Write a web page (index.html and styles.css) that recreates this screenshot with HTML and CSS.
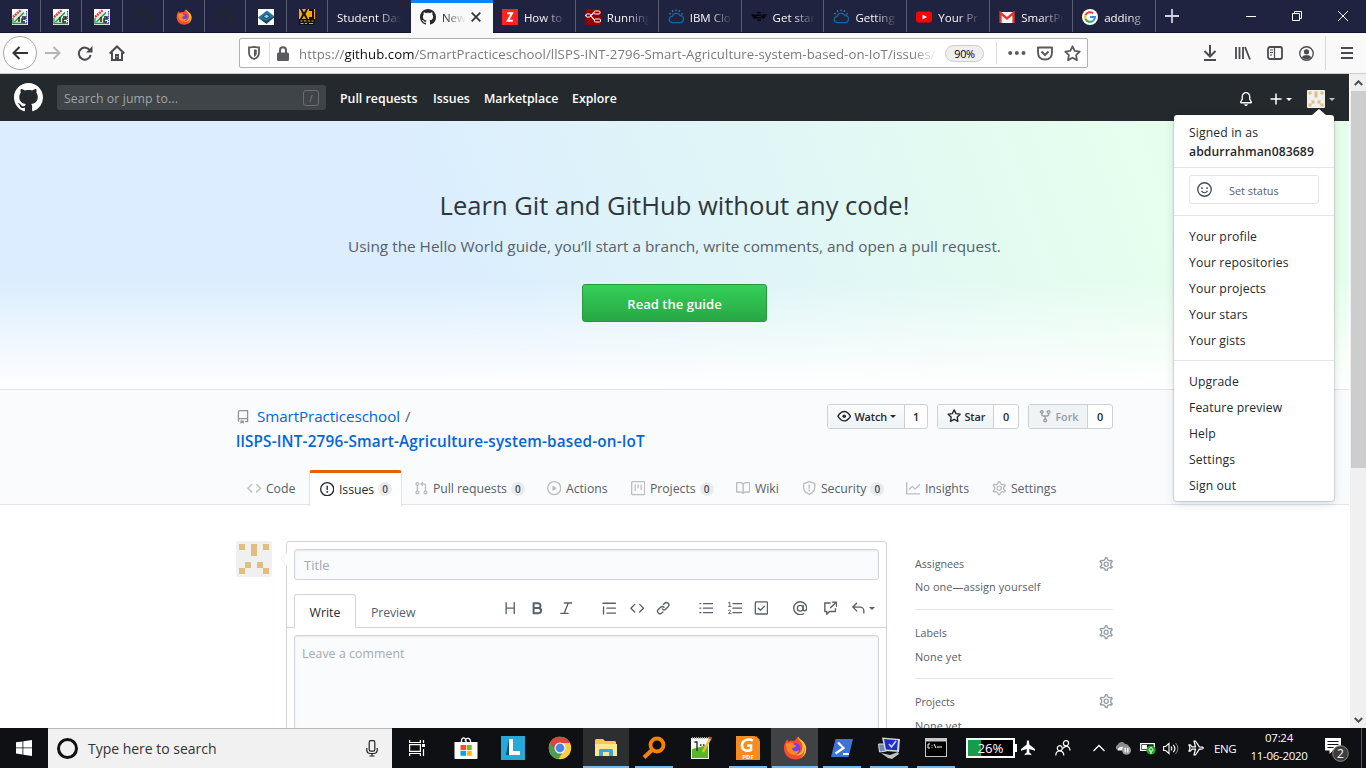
FILE: index.html
```html
<!DOCTYPE html>
<html lang="en">
<head>
<meta charset="utf-8">
<title>New Issue</title>
<link rel="stylesheet" href="styles.css">
</head>
<body>
<svg class="defs" aria-hidden="true">
<symbol id="github" viewBox="0 0 16 16"><path d="M8 0C3.58 0 0 3.58 0 8c0 3.54 2.29 6.53 5.47 7.59.4.07.55-.17.55-.38 0-.19-.01-.82-.01-1.49-2.01.37-2.53-.49-2.69-.94-.09-.23-.48-.94-.82-1.13-.28-.15-.68-.52-.01-.53.63-.01 1.08.58 1.23.82.72 1.21 1.87.87 2.33.66.07-.52.28-.87.51-1.07-1.78-.2-3.64-.89-3.64-3.95 0-.87.31-1.59.82-2.15-.08-.2-.36-1.02.08-2.12 0 0 .67-.21 2.2.82.64-.18 1.32-.27 2-.27.68 0 1.36.09 2 .27 1.53-1.04 2.2-.82 2.2-.82.44 1.1.16 1.92.08 2.12.51.56.82 1.27.82 2.15 0 3.07-1.87 3.75-3.65 3.95.29.25.54.73.54 1.48 0 1.07-.01 1.93-.01 2.2 0 .21.15.46.55.38A8.013 8.013 0 0016 8c0-4.42-3.58-8-8-8z"/></symbol>
<symbol id="repo" viewBox="0 0 16 16"><path fill-rule="evenodd" d="M2 2.5A2.5 2.5 0 014.5 0h8.75a.75.75 0 01.75.75v12.5a.75.75 0 01-.75.75h-2.5a.75.75 0 110-1.5h1.75v-2h-8a1 1 0 00-.714 1.7.75.75 0 01-1.072 1.05A2.495 2.495 0 012 11.5v-9zm10.5-1V9h-8c-.356 0-.694.074-1 .208V2.5a1 1 0 011-1h8zM5 12.25v3.25a.25.25 0 00.4.2l1.45-1.087a.25.25 0 01.3 0L8.6 15.7a.25.25 0 00.4-.2v-3.25a.25.25 0 00-.25-.25h-3.5a.25.25 0 00-.25.25z"/></symbol>
<symbol id="code" viewBox="0 0 16 16"><path d="M4.72 3.22a.75.75 0 011.06 1.06L2.06 8l3.72 3.72a.75.75 0 11-1.06 1.06L.47 8.53a.75.75 0 010-1.06l4.25-4.25zm6.56 0a.75.75 0 10-1.06 1.06L13.94 8l-3.72 3.72a.75.75 0 101.06 1.06l4.25-4.25a.75.75 0 000-1.06l-4.25-4.25z"/></symbol>
<symbol id="issue" viewBox="0 0 16 16"><path fill-rule="evenodd" d="M8 1.5a6.5 6.5 0 100 13 6.5 6.5 0 000-13zM0 8a8 8 0 1116 0A8 8 0 010 8zm9 3a1 1 0 11-2 0 1 1 0 012 0zm-.25-6.25a.75.75 0 00-1.5 0v3.5a.75.75 0 001.5 0v-3.5z"/></symbol>
<symbol id="pull" viewBox="0 0 16 16"><path fill-rule="evenodd" d="M7.177 3.073L9.573.677A.25.25 0 0110 .854v4.792a.25.25 0 01-.427.177L7.177 3.427a.25.25 0 010-.354zM3.75 2.5a.75.75 0 100 1.5.75.75 0 000-1.5zm-2.25.75a2.25 2.25 0 113 2.122v5.256a2.251 2.251 0 11-1.5 0V5.372A2.25 2.25 0 011.5 3.25zM11 2.5h-1V4h1a1 1 0 011 1v5.628a2.251 2.251 0 101.5 0V5A2.5 2.5 0 0011 2.5zm1 10.25a.75.75 0 111.5 0 .75.75 0 01-1.5 0zM3.75 12a.75.75 0 100 1.5.75.75 0 000-1.5z"/></symbol>
<symbol id="play" viewBox="0 0 16 16"><circle cx="8" cy="8" r="7.25" fill="none" stroke="currentColor" stroke-width="1.5"/><path d="M6.379 5.227A.25.25 0 006 5.442v5.117a.25.25 0 00.379.214l4.264-2.559a.25.25 0 000-.428L6.379 5.227z"/></symbol>
<symbol id="project" viewBox="0 0 16 16"><rect x=".75" y=".75" width="14.5" height="14.5" rx="1" fill="none" stroke="currentColor" stroke-width="1.5"/><path d="M4 4h1.4v7H4zM7.3 4h1.4v4H7.3zM10.6 4H12v6h-1.4z"/></symbol>
<symbol id="book" viewBox="0 0 16 16"><path fill-rule="evenodd" d="M0 1.75A.75.75 0 01.75 1h4.253c1.227 0 2.317.59 3 1.501A3.744 3.744 0 0111.006 1h4.245a.75.75 0 01.75.75v10.5a.75.75 0 01-.75.75h-4.507a2.25 2.25 0 00-1.591.659l-.622.621a.75.75 0 01-1.06 0l-.622-.621A2.25 2.25 0 005.258 13H.75a.75.75 0 01-.75-.75V1.75zm8.755 3a2.25 2.25 0 012.25-2.25H14.5v9h-3.757c-.71 0-1.4.201-1.992.572l.004-7.322zm-1.504 7.324l.004-5.073-.002-2.253A2.25 2.25 0 005.003 2.5H1.5v9h3.757a3.75 3.75 0 011.994.574z"/></symbol>
<symbol id="shield" viewBox="0 0 16 16"><path d="M8 .8l6.200 2.100V7c0 3.500-1.700 6-6.200 8-4.500-2-6.200-4.500-6.200-8V2.900z" fill="none" stroke="currentColor" stroke-width="1.500" stroke-linejoin="round"/><path d="M7.250 4h1.500v4.500h-1.500z"/><circle cx="8" cy="10.500" r="1"/></symbol>
<symbol id="graph" viewBox="0 0 16 16"><path d="M1.500 1.750a.75.75 0 00-1.500 0v12.500c0 .414.336.75.75.75h14.500a.75.75 0 000-1.500H1.500V1.750zm14.280 2.530a.75.75 0 00-1.060-1.060L10 7.940 7.530 5.470a.75.75 0 00-1.060 0L3.220 8.720a.75.75 0 001.060 1.060L7 7.060l2.470 2.470a.75.75 0 001.060 0l5.250-5.250z"/></symbol>
<symbol id="gear" viewBox="0 0 16 16"><g fill="none" stroke="currentColor" stroke-width="1.400"><path transform="translate(8 8) scale(1.120) translate(-8 -8)" d="M7.429 1.525a6.593 6.593 0 011.142 0c.036.003.108.036.137.146l.289 1.105c.147.56.55.967.997 1.189.174.086.341.183.501.29.417.278.97.423 1.530.27l1.102-.303c.11-.03.175.016.195.046.219.31.41.641.573.989.014.031.022.11-.059.19l-.815.806c-.411.406-.562.957-.53 1.456a4.588 4.588 0 010 .582c-.032.499.119 1.050.53 1.456l.815.806c.08.08.073.159.059.19a6.494 6.494 0 01-.573.99c-.02.029-.086.074-.195.045l-1.103-.303c-.559-.153-1.112-.008-1.529.27-.16.107-.327.204-.5.29-.449.222-.851.628-.998 1.189l-.289 1.105c-.029.11-.101.143-.137.146a6.613 6.613 0 01-1.142 0c-.036-.003-.108-.037-.137-.146l-.289-1.105c-.147-.56-.55-.967-.997-1.189a4.502 4.502 0 01-.501-.29c-.417-.278-.97-.423-1.530-.27l-1.102.303c-.11.03-.175-.016-.195-.046a6.492 6.492 0 01-.573-.989c-.014-.031-.022-.11.059-.19l.815-.806c.411-.406.562-.957.53-1.456a4.587 4.587 0 010-.582c.032-.499-.119-1.050-.53-1.456l-.815-.806c-.08-.08-.073-.159-.059-.19a6.440 6.440 0 01.573-.99c.02-.029.086-.075.195-.045l1.103.303c.559.153 1.112.008 1.529-.27.16-.107.327-.204.5-.29.449-.222.851-.628.998-1.189l.289-1.105c.029-.11.101-.143.137-.146z"/><circle cx="8" cy="8" r="2.300"/></g></symbol>
<symbol id="eye" viewBox="0 0 16 16"><path d="M1 8c1-1.600 3.500-5.250 7-5.250S14 6.400 15 8c-1 1.600-3.500 5.250-7 5.250S2 9.600 1 8z" fill="none" stroke="currentColor" stroke-width="1.500" stroke-linejoin="round"/><circle cx="8" cy="8" r="2"/></symbol>
<symbol id="star" viewBox="0 0 16 16"><path d="M8 1l2.060 4.180 4.600.67-3.330 3.240.790 4.580L8 11.500l-4.120 2.170.79-4.580-3.330-3.240 4.600-.67z" fill="none" stroke="currentColor" stroke-width="1.500" stroke-linejoin="round"/></symbol>
<symbol id="fork" viewBox="0 0 16 16"><path fill-rule="evenodd" d="M5 3.250a.75.75 0 11-1.500 0 .75.75 0 011.500 0zm0 2.122a2.250 2.250 0 10-1.500 0v.878A2.250 2.250 0 005.750 8.500h1.500v2.128a2.251 2.251 0 101.500 0V8.500h1.500a2.250 2.250 0 002.250-2.250v-.878a2.250 2.250 0 10-1.500 0v.878a.75.75 0 01-.75.75h-4.500A.75.75 0 015 6.250v-.878zm3.750 7.378a.75.75 0 11-1.500 0 .75.75 0 011.500 0zm3-8.750a.75.75 0 100-1.500.75.75 0 000 1.500z"/></symbol>
<symbol id="bell" viewBox="0 0 16 16"><path fill-rule="evenodd" d="M8 16a2 2 0 001.985-1.750c.017-.137-.097-.25-.235-.25h-3.500c-.138 0-.252.113-.235.25A2 2 0 008 16z"/><path d="M8 .75A4.250 4.250 0 003.750 5v3L2 11.100c-.3.600 0 1.150.6 1.150h10.800c.6 0 .9-.55.6-1.150L12.250 8V5A4.250 4.250 0 008 .75z" fill="none" stroke="currentColor" stroke-width="1.500"/></symbol>
<symbol id="link" viewBox="0 0 16 16"><path d="M7.775 3.275a.75.75 0 001.060 1.060l1.250-1.250a2 2 0 112.830 2.830l-2.500 2.500a2 2 0 01-2.830 0 .75.75 0 00-1.060 1.060 3.500 3.500 0 004.950 0l2.500-2.500a3.500 3.500 0 00-4.950-4.950l-1.250 1.250zm-4.690 9.640a2 2 0 010-2.830l2.500-2.500a2 2 0 012.830 0 .75.75 0 001.060-1.060 3.500 3.500 0 00-4.950 0l-2.500 2.500a3.500 3.500 0 004.950 4.950l1.250-1.250a.75.75 0 00-1.060-1.060l-1.250 1.250a2 2 0 01-2.830 0z"/></symbol>
<symbol id="reply" viewBox="0 0 16 16"><path d="M6.780 1.970a.75.75 0 010 1.060L3.810 6h6.440A4.750 4.750 0 0115 10.750v2.500a.75.75 0 01-1.500 0v-2.500a3.250 3.250 0 00-3.250-3.250H3.810l2.970 2.970a.75.75 0 11-1.060 1.060L1.470 7.280a.75.75 0 010-1.060l4.250-4.250a.75.75 0 011.060 0z"/></symbol>
<symbol id="identicon" viewBox="0 0 36 36"><rect width="36" height="36" rx="2" fill="#f0f0f0"/><path fill="#dfbe7f" d="M3 3h6v6H3zM15 3h6v12h-6zM27 3h6v6h-6zM9 21h6v6H9zM21 21h6v6h-6zM3 27h6v6H3zM27 27h6v6h-6z"/></symbol>
<symbol id="vmark" viewBox="0 0 16 16"><rect width="16" height="16" fill="#fff"/><path d="M2 14V8l6-5 5 1v10z" fill="#d8efe0"/><path d="M1 15V9M1 14.500h14M2.500 13L12 3.500" stroke="#239244" stroke-width="1.300"/><path d="M1 8l8-7" stroke="#e13a3f" stroke-width="2.400" stroke-dasharray="2 .7"/><path d="M14.500 2v12" stroke="#3d49d8" stroke-width="1.300" stroke-dasharray="1.500 .7"/><path d="M7 8v5M10 8h3v2h-3v3h3" stroke="#222" stroke-width="1.500" fill="none"/></symbol>
<symbol id="firefox" viewBox="0 0 24 24"><path d="M1 13C.6 8 3 5 4.500 3c0 1.500.7 2.200 1.500 2.700C8 4 9.500 4.500 11 5c2-1 2-3 4-4.500 0 2.500 6 4 8 10.500 1.500 7-4 12.500-10.500 12.500C6 23.500 1.500 19 1 13z" fill="#ff4a33"/><path d="M15 .5c-.5 3 3.500 4.500 4.500 9 .5 6-3 9.500-7.500 9.500 6 1.500 9.500-2.500 9.500-8 1 4-.5 9-5 11.500 5-1.500 7.500-6.500 6.500-11.500C21.500 4.500 16 3.500 15 .5z" fill="#ffc72e"/><circle cx="12" cy="12.500" r="5.500" fill="#7a3fe0"/><path d="M3 8c3-2.500 6-1.500 8-.5-1 .7 0 1.800 2.500 2-1 2-3.500 1.500-4.500 3 .5 3 4 3.500 7 1.500-1 4-4 5.500-7 4.500C5 17.500 3 13 3 8z" fill="#ff8a1f"/></symbol>
<symbol id="cloud" viewBox="0 0 18 18"><path d="M5 15.300a3.500 3.500 0 01-.3-7 4.800 4.800 0 018.700-1 4 4 0 01.3 8z" fill="none" stroke="#17649f" stroke-width="1.500"/><path d="M3 6L1.300 4.700M5.500 3.500l-.8-2M9 2.600V.5M12.300 3.500l1-2M15 6l1.700-1" stroke="#2e8e9f" stroke-width="1.300"/></symbol>
<symbol id="plane" viewBox="0 0 16 16"><path d="M8 .3c1 0 1.300 1.500 1.300 4.300L15 9v1.700L9.300 9v3.500l2 1.600v1.200L8 14.500l-3.300.8v-1.200l2-1.600V9L1 10.700V9l5.700-4.400C6.700 1.800 7 .3 8 .3z"/></symbol>
</svg>

<header class="tabstrip">
  <div class="pin"><svg class="fav"><use href="#vmark"/></svg></div>
  <div class="pin"><svg class="fav"><use href="#vmark"/></svg></div>
  <div class="pin"><svg class="fav"><use href="#vmark"/></svg></div>
  <div class="pin dim"><svg class="fav"><use href="#github"/></svg></div>
  <div class="pin"><svg class="fav"><use href="#firefox"/></svg></div>
  <div class="pin dim"><svg class="fav"><use href="#github"/></svg></div>
  <div class="pin"><svg class="fav" viewBox="0 0 16 16"><rect width="16" height="16" fill="#fff"/><path d="M9 1.500l7 5.500-7.500 7L0 8.500z" fill="#2f7498"/><path d="M0 8.500L8.500 12 16 7v1.500L8.500 15z" fill="#17455c"/><path d="M8.500 4.500l4 2.700-4 3.300-4-2.700z" fill="#1b4a66"/><path d="M8.500 5.500l2.500 1.700-2.500 2-2.500-1.700z" fill="#8ed0ee"/></svg></div>
  <div class="pin"><svg class="fav" viewBox="0 0 16 16"><rect width="16" height="16" fill="#f4aa0c"/><path d="M1 0h2l2 3.500L7 0h2L6.500 5 9 10H7L5 6.500 3 10H1l2.500-5zM10 0h5v10h-5V8h3V2h-3zM0 10h16v6H0z" fill="#111"/><path d="M1.500 12h2M5 12h2.500M9 12h2M12.500 12h2M1.500 14.500h3M6 14.500h2M10 14.500h4" stroke="#f4aa0c"/></svg></div>
  <div class="tab notitle-icon"><span class="ttl">Student Das</span></div>
  <div class="tab active"><svg class="fav"><use href="#github"/></svg><span class="ttl">New</span><svg class="close" viewBox="0 0 10 10"><path d="M.7.7l8.600 8.600M9.300.7L.7 9.300" stroke="#333" stroke-width="1.700"/></svg></div>
  <div class="tab"><svg class="fav" viewBox="0 0 16 16"><rect width="16" height="16" fill="#f22"/><path d="M5.200 4.200h4.800L5.800 11.800h5" fill="none" stroke="#fff" stroke-width="2"/></svg><span class="ttl">How to</span></div>
  <div class="tab"><svg class="fav" viewBox="0 0 16 16"><rect width="16" height="16" rx="1.500" fill="#8f0000"/><path d="M0 6.500h5C8 6.500 7 3.500 9.500 3.500M4 6.500c4 0 3.500 5 7 5" fill="none" stroke="#fff" stroke-width="1.200"/><rect x="9" y="2" width="6" height="3" rx="1" fill="#8f0000" stroke="#fff"/><rect x="9.500" y="10" width="6" height="3" rx="1" fill="#8f0000" stroke="#fff"/><rect x="1" y="5" width="4.500" height="3" rx="1" fill="#8f0000" stroke="#fff"/></svg><span class="ttl">Running</span></div>
  <div class="tab"><svg class="fav"><use href="#cloud"/></svg><span class="ttl">IBM Clo</span></div>
  <div class="tab"><svg class="fav" viewBox="0 0 16 16"><path d="M0 5l6 1v3L3 10zM16 5l-6 1v3l3 1zM6 3h4v1.200H6zM5 5.500h6V7H5zM5 8h6v1.500H5zM6 10.500h4V12H6z" fill="#05050c"/></svg><span class="ttl">Get star</span></div>
  <div class="tab"><svg class="fav"><use href="#cloud"/></svg><span class="ttl">Getting</span></div>
  <div class="tab"><svg class="fav" viewBox="0 0 16 16"><rect y="2.500" width="16" height="11" rx="2.500" fill="#f00"/><path d="M6.500 5.500v5L11 8z" fill="#fff"/></svg><span class="ttl">Your Pr</span></div>
  <div class="tab"><svg class="fav" viewBox="0 0 16 16"><rect x="1" y="3" width="14" height="11" fill="#f5f5f5"/><path d="M1.500 14V4L8 9.500 14.500 4v10" fill="none" stroke="#e2392e" stroke-width="2.300"/></svg><span class="ttl">SmartPr</span></div>
  <div class="tab"><svg class="fav" viewBox="0 0 16 16"><circle cx="8" cy="8" r="8" fill="#fff"/><g fill="none" stroke-width="2"><path d="M11.200 4.300A5 5 0 003.500 6" stroke="#ea4335"/><path d="M3.500 6a5 5 0 000 4" stroke="#fbbc05"/><path d="M3.500 10a5 5 0 007.700 1.700" stroke="#34a853"/><path d="M11.200 11.700A5 5 0 0013 8H8" stroke="#4285f4"/></g></svg><span class="ttl soft">adding</span></div>
  <div class="newtab"><svg width="14" height="14" viewBox="0 0 14 14"><path d="M7 0v14M0 7h14" stroke="#d0d0d8" stroke-width="1.800"/></svg></div>
  <div class="winbtns">
    <svg width="10" height="10"><path d="M0 5.500h10" stroke="#fff"/></svg>
    <svg width="10" height="10" fill="none" stroke="#fff"><path d="M.5 2.500h7v7h-7zM2.500 2.500v-2h7v7h-2"/></svg>
    <svg width="10" height="10"><path d="M0 0l10 10M10 0L0 10" stroke="#fff"/></svg>
  </div>
</header>

<div class="toolbar">
  <div class="back"><svg width="16" height="14" viewBox="0 0 16 14"><path d="M16 7H2M7.500 1L1.500 7l6 6" fill="none" stroke="#333" stroke-width="2"/></svg></div>
  <svg class="fwd" width="16" height="14" viewBox="0 0 16 14"><path d="M0 7h14M8.500 1l6 6-6 6" fill="none" stroke="#b5b5b5" stroke-width="2"/></svg>
  <svg class="reload" width="16" height="16" viewBox="0 0 16 16"><path d="M13 5.500A6 6 0 1013.700 10" fill="none" stroke="#4a4a4f" stroke-width="2"/><path d="M15.500 1v6.500H9z" fill="#4a4a4f"/></svg>
  <svg class="home" width="16" height="16" viewBox="0 0 16 16"><path d="M.7 8.500L8 1.500l7.300 7M3 7.500V15h10V7.500M8 15v-5" fill="none" stroke="#4a4a4f" stroke-width="2"/><path d="M6 9h4v6H6z" fill="#4a4a4f"/><path d="M7.500 11h1v1h-1z" fill="#fff"/></svg>
  <div class="urlbar">
    <svg class="u-shield" width="12" height="14" viewBox="0 0 12 14"><path d="M1 1.500C3 1.500 5 1 6 1s3 .5 5 .5v5C11 10 9 12 6 13 3 12 1 10 1 6.500z" fill="none" stroke="#5b5b5e" stroke-width="1.800"/><path d="M6 3.500c1.500 0 2 .2 2.800.3V7c0 2-1 3-2.800 3.800z" fill="#5b5b5e"/></svg>
    <i class="u-div"></i>
    <svg class="u-lock" width="12" height="15" viewBox="0 0 12 15"><rect y="6.500" width="12" height="8.500" rx="1.500" fill="#5b5b5e"/><path d="M3 7V4.200a3 3 0 016 0V7" fill="none" stroke="#5b5b5e" stroke-width="2"/></svg>
    <span class="url">https://<b>github.com</b>/SmartPracticeschool/llSPS-INT-2796-Smart-Agriculture-system-based-on-IoT/issues/</span>
    <span class="zoom">90%</span>
    <i class="u-div d2"></i>
    <svg class="u-dots" width="18" height="4"><g fill="#5b5b5e"><circle cx="2.200" cy="2" r="2"/><circle cx="8.800" cy="2" r="2"/><circle cx="15.500" cy="2" r="2"/></g></svg>
    <svg class="u-pocket" width="16" height="15" viewBox="0 0 16 15"><path d="M1 1.500h14V6c0 5-3 7.500-7 7.500S1 11 1 6z" fill="none" stroke="#5b5b5e" stroke-width="1.900" stroke-linejoin="round"/><path d="M4.500 5.500L8 9l3.500-3.500" fill="none" stroke="#5b5b5e" stroke-width="2"/></svg>
    <svg class="u-star" width="17" height="17" viewBox="0 0 16 16"><path d="M8 1.200l2.100 4.300 4.700.7-3.400 3.300.8 4.700L8 12l-4.200 2.200.8-4.700L1.200 6.200l4.700-.7z" fill="none" stroke="#5b5b5e" stroke-width="1.700" stroke-linejoin="round"/></svg>
  </div>
  <div class="tb-right">
    <svg width="14" height="16" viewBox="0 0 14 16"><path d="M7 0v11M1.500 6L7 11.500 12.500 6M1 15h12" fill="none" stroke="#4a4a4f" stroke-width="2"/></svg>
    <svg width="16" height="14" viewBox="0 0 16 14"><path d="M1 1v12M4.500 1v12M8 1v12M10 1l5 12.500" fill="none" stroke="#4a4a4f" stroke-width="1.800"/></svg>
    <svg width="16" height="14" viewBox="0 0 16 14"><rect x="1" y="1" width="14" height="12" rx="2" fill="none" stroke="#4a4a4f" stroke-width="1.800"/><path d="M7.500 1v12M3 4h3M3 6.500h3M3 9h2" stroke="#4a4a4f" stroke-width="1.200"/></svg>
    <svg width="15" height="15" viewBox="0 0 16 16"><circle cx="8" cy="8" r="7.200" fill="none" stroke="#4a4a4f" stroke-width="1.400"/><circle cx="8" cy="6.200" r="2.800" fill="#4a4a4f"/><path d="M3 12c1-1.500 2-2 3-2.200h4c1 .2 2 .7 3 2.200-1.500 1.600-3 2-5 2s-3.500-.4-5-2z" fill="#4a4a4f"/></svg>
    <i class="tb-div"></i>
    <svg width="12" height="12"><path d="M0 1h12M0 6h12M0 11h12" stroke="#4a4a4f" stroke-width="2"/></svg>
  </div>
</div>

<div class="view">
<div class="page">
  <div class="ghhead">
    <svg class="logo"><use href="#github"/></svg>
    <div class="search"><span>Search or jump to...</span><kbd>/</kbd></div>
    <nav class="ghnav"><a>Pull requests</a><a>Issues</a><a>Marketplace</a><a>Explore</a></nav>
    <div class="ghright">
      <svg class="belli"><use href="#bell"/></svg>
      <svg class="plusi" width="12" height="12"><path d="M6 .5v11M.5 6h11" stroke="#fff" stroke-width="1.500"/></svg><i class="caret"></i>
      <svg class="me"><use href="#identicon"/></svg><i class="caret faded"></i>
    </div>
    <div class="menu">
      <div class="signed">Signed in as<strong>abdurrahman083689</strong></div>
      <div class="statusrow"><div class="status"><svg width="15" height="15" viewBox="0 0 16 16"><circle cx="8" cy="8" r="7.200" fill="none" stroke="#444d56" stroke-width="1.400"/><circle cx="5.300" cy="6.500" r="1" fill="#444d56"/><circle cx="10.700" cy="6.500" r="1" fill="#444d56"/><path d="M4.800 9.500c1.500 2.600 4.900 2.600 6.400 0" fill="none" stroke="#444d56" stroke-width="1.300"/></svg><span>Set status</span></div></div>
      <div class="mgroup"><a>Your profile</a><a>Your repositories</a><a>Your projects</a><a>Your stars</a><a>Your gists</a></div>
      <div class="mgroup last"><a>Upgrade</a><a>Feature preview</a><a>Help</a><a>Settings</a><a>Sign out</a></div>
    </div>
  </div>

  <section class="hero">
    <h2>Learn Git and GitHub without any code!</h2>
    <p>Using the Hello World guide, you’ll start a branch, write comments, and open a pull request.</p>
    <a class="green">Read the guide</a>
  </section>

  <section class="repohead">
    <div class="repotop">
      <div class="reponame">
        <div class="owner"><svg class="repoi"><use href="#repo"/></svg><span>SmartPracticeschool</span><em>/</em></div>
        <strong>llSPS-INT-2796-Smart-Agriculture-system-based-on-IoT</strong>
      </div>
      <div class="actions">
        <div class="btng watch"><span><svg><use href="#eye"/></svg>Watch<i class="caret dark"></i></span><b>1</b></div>
        <div class="btng starb"><span><svg><use href="#star"/></svg>Star</span><b>0</b></div>
        <div class="btng forkb"><span><svg><use href="#fork"/></svg>Fork</span><b>0</b></div>
      </div>
    </div>
    <nav class="reponav">
      <a><svg><use href="#code"/></svg>Code</a>
      <a class="sel"><svg><use href="#issue"/></svg>Issues<i>0</i></a>
      <a><svg><use href="#pull"/></svg>Pull requests<i>0</i></a>
      <a><svg><use href="#play"/></svg>Actions</a>
      <a><svg><use href="#project"/></svg>Projects<i>0</i></a>
      <a><svg><use href="#book"/></svg>Wiki</a>
      <a><svg><use href="#shield"/></svg>Security<i>0</i></a>
      <a><svg><use href="#graph"/></svg>Insights</a>
      <a><svg><use href="#gear"/></svg>Settings</a>
    </nav>
  </section>

  <section class="main">
    <svg class="avatar"><use href="#identicon"/></svg>
    <div class="box">
      <svg class="notch" width="7" height="14"><path d="M7 .5L.7 7 7 13.500" fill="#fff" stroke="#eceef0"/></svg>
      <div class="title">Title</div>
      <div class="edit">
        <span class="write">Write</span><span class="preview">Preview</span>
        <div class="tools">
          <svg viewBox="0 0 16 16"><path d="M3.500 2v12M12.500 2v12M3.500 8h9" class="s"/></svg>
          <svg viewBox="0 0 16 16"><path d="M4 2.500h5a2.600 2.600 0 010 5.300H4zM4 7.800h5.500a2.800 2.800 0 010 5.700H4z" class="s bold"/></svg>
          <svg viewBox="0 0 16 16"><path d="M6 2.200h8M2 13.800h8M10.300 2.200L5.700 13.800" class="s"/></svg>
          <svg viewBox="0 0 16 16"><path d="M1 2.500h14M5.500 8H15M5.500 13.500H15M1.700 6.500v8" class="s"/></svg>
          <svg viewBox="0 0 16 16"><use href="#code"/></svg>
          <svg viewBox="0 0 16 16"><use href="#link"/></svg>
          <svg viewBox="0 0 16 16"><path d="M5 3h10.500M5 8h10.500M5 13h10.500M1 3h1M1 8h1M1 13h1" class="s"/></svg>
          <svg viewBox="0 0 16 16"><path d="M5.500 3H16M5.500 8H16M5.500 13H16" class="s"/><path d="M.5 2L2 1.300V6M.5 6h3M.5 10.500c1.500-1.300 3 0 2 1.300L.7 14h2.800" class="s thin"/></svg>
          <svg viewBox="0 0 16 16"><rect x="1.500" y="1" width="13.500" height="13.500" rx="1" class="s"/><path d="M4.800 8l2.400 2.300L11.500 6" class="s"/></svg>
          <svg viewBox="0 0 16 16"><circle cx="8" cy="8" r="3.200" class="s"/><path d="M11.200 4.800V9c0 2.800 4 2.500 4-1.200A7.200 7.200 0 108 15.200c1.500 0 2.700-.4 3.800-1" class="s"/></svg>
          <svg viewBox="0 0 16 16"><path d="M8 2.200H2v9.500h2.200v3l3-3h6.600V8.500M8.500 7.500L14.500 1.500M10.500 1.300H15v4.500" class="s"/></svg>
          <svg viewBox="0 0 16 16"><use href="#reply"/></svg>
          <i class="caret grey"></i>
        </div>
      </div>
      <div class="comment">Leave a comment</div>
    </div>
    <aside class="side">
      <div class="sitem"><h4>Assignees<svg><use href="#gear"/></svg></h4><p>No one—assign yourself</p></div>
      <div class="sitem second"><h4>Labels<svg><use href="#gear"/></svg></h4><p>None yet</p></div>
      <div class="sitem second"><h4>Projects<svg><use href="#gear"/></svg></h4><p>None yet</p></div>
    </aside>
  </section>
</div>
<div class="scroll">
  <svg width="9" height="6"><path d="M.8 5l3.700-3.700L8.200 5" fill="none" stroke="#505050" stroke-width="2"/></svg>
  <div class="thumb"></div>
  <svg width="9" height="6"><path d="M.8 1l3.700 3.700L8.200 1" fill="none" stroke="#505050" stroke-width="2"/></svg>
</div>
</div>

<footer class="taskbar">
  <div class="start"><svg width="16" height="16" viewBox="0 0 16 16"><path d="M0 2.300l6.500-.9v6.100H0zM7.300 1.300L16 0v7.500H7.300zM0 8.300h6.500v6.200L0 13.600zM7.300 8.300H16V16l-8.700-1.300z" fill="#fff"/></svg></div>
  <div class="wsearch"><i class="cortana"></i><span>Type here to search</span><svg width="12" height="17" viewBox="0 0 12 17" fill="none" stroke="#222" stroke-width="1.200"><rect x="3.200" y=".7" width="5.600" height="10.500" rx="1.500"/><path d="M.8 8v2c0 2 1.500 3.500 3.500 3.500h3.400c2 0 3.500-1.500 3.500-3.500V8M6 13.500V16M3.500 16h5"/></svg></div>
  <div class="tview"><svg width="17" height="16" viewBox="0 0 17 16" fill="none" stroke="#fff" stroke-width="1.200"><path d="M.6 0v2.500h10.800V0M.6 16v-2.500h10.800V16M.6 4.600h10.800v6.800H.6zM14.500 0v3M14.500 9v7"/><path d="M13 4h3v3h-3z" fill="#fff" stroke="none"/></svg></div>
  <div class="app"><svg width="24" height="24" viewBox="0 0 24 24"><path d="M7.500 7V4.500C8 1 11 1 12 4.500V7M11 5c1-4 6-3.500 5.500 2" fill="none" stroke="#fff" stroke-width="1.300"/><path d="M.5 6h23v16.500l-1 .5h-21l-1-.5z" fill="#fff"/><path d="M6.500 9H12v5H6.500z" fill="#f25022"/><path d="M12.700 9h5v5h-5z" fill="#7fba00"/><path d="M6.500 14.800H12v5H6.500z" fill="#00a4ef"/><path d="M12.700 14.800h5v5h-5z" fill="#ffb900"/></svg></div>
  <div class="app"><svg width="24" height="24" viewBox="0 0 24 24"><path fill="#28a8d8" d="M0 0h24v24H0z"/><path d="M8 3L5 19h6l2-3H9z" fill="#0b4e78"/><path d="M8 3h4v12h7v4H8z" fill="#fff"/></svg></div>
  <div class="app"><svg width="24" height="24" viewBox="0 0 24 24"><circle cx="12" cy="12" r="11.200" fill="#f8ce45"/><path d="M12 12L2.300 6.400A11.200 11.200 0 0112 .8c4.200 0 7.700 2.200 9.700 5.600H12z" fill="#d9473c"/><path d="M12 12L2.300 6.400a11.200 11.200 0 008.200 16.700l5.500-8.500z" fill="#4a9e4f"/><path d="M2.300 6.400L7.500 15 12 7h9.700A11 11 0 002.300 6.400z" fill="#d9473c"/><circle cx="12" cy="12" r="5.500" fill="#fff"/><circle cx="12" cy="12" r="4.400" fill="#4a86e8"/></svg></div>
  <div class="app exp on"><svg width="24" height="24" viewBox="0 0 24 24"><path d="M1 4l1-1h7l2 2h10l1 1v13H1z" fill="#f5c84e"/><path d="M1 8h22v12H1z" fill="#ffe694"/><path d="M5 20v-6l1-1h12l1 1v6h-4v-4H9v4z" fill="#35a7dd"/></svg></div>
  <div class="app on"><svg width="24" height="24" viewBox="0 0 24 24" fill="none"><circle cx="15" cy="9" r="6.500" stroke="#f7810a" stroke-width="3.800"/><path d="M10 14l-8 7.500" stroke="#f7810a" stroke-width="4.200"/></svg></div>
  <div class="app"><svg width="24" height="24" viewBox="0 0 24 24"><path d="M2 2h18v21H2z" fill="#f4f7f0"/><path d="M3 13l16-4v13H3z" fill="#5db526"/><path d="M5.500 6H8v9M8 8v5M11 9h1.500M14 9h1.500" stroke="#222" fill="none" stroke-width="1.300"/><path d="M14 16l7.500-14" stroke="#e7c33c" stroke-width="2.500"/><path d="M21 3l1-2" stroke="#cc3939" stroke-width="3"/><path d="M3 2h17" stroke="#aaa" stroke-width="2" stroke-dasharray="1 1"/></svg></div>
  <div class="app on"><svg width="24" height="24" viewBox="0 0 24 24"><path d="M0 0h19l5 5v19H0z" fill="#f68b1f"/><path d="M20 0l4 4h-4z" fill="#f68b1f"/><path d="M17 4.500c-4-2-11-1-11 5 0 4.500 4 6.500 9 4.500V9.500h-4" fill="none" stroke="#fff" stroke-width="2.600"/><text x="12" y="22.500" text-anchor="middle" class="pdf">PDF</text></svg></div>
  <div class="app current on"><svg width="24" height="24"><use href="#firefox"/></svg></div>
  <div class="app on"><svg width="24" height="24" viewBox="0 0 24 24"><path d="M5.500 3H23l-4.500 18H1z" fill="#3d74d8"/><path d="M8 6.500l5.500 5.500L5.500 17.500M13 18h6" fill="none" stroke="#fff" stroke-width="2.200"/></svg></div>
  <div class="app on"><svg width="24" height="24" viewBox="0 0 24 24"><path d="M1.500 8h8v7l-7 1z" fill="#7288b8" stroke="#ddd"/><path d="M5 1.500l18 1.500-1 13-14-1z" fill="#d8d8d8"/><path d="M7 3l14 1.300-1 10L9 13.500z" fill="#1d2ec8"/><path d="M12 8l2.500 3L19 5" stroke="#cfd6ff" stroke-width="1.500" fill="none"/><path d="M4 17l9 2 8-3 1 2-7 5-4-1z" fill="#c2c2c2"/></svg></div>
  <div class="app on"><svg width="24" height="24" viewBox="0 0 24 24"><path d="M1 2h22v19H1z" fill="#c9c9c9"/><path d="M2 5.500h20V20H2z" fill="#000"/><path d="M6 8H4v4h2M8 9v.8M8 11v.8M10 8l2 4M13 11h5" stroke="#fff" fill="none"/></svg></div>
  <div class="tray">
    <div class="batt"><span>26%</span></div><i class="nub"></i>
    <svg class="t-plane" width="16" height="16"><use href="#plane"/></svg>
    <svg class="t-people" width="16" height="16" viewBox="0 0 16 16" fill="none" stroke="#fff" stroke-width="1.200"><circle cx="4.800" cy="8.200" r="2.500"/><path d="M.8 15.500c0-6 8-6 8 0"/><circle cx="11" cy="3.300" r="2.600"/><path d="M8 8.500c2-3.500 7-2.500 7 2"/></svg>
    <svg class="t-up" width="12" height="8" fill="none" stroke="#fff" stroke-width="1.300"><path d="M.5 7L6 1.500 11.500 7"/></svg>
    <svg class="t-cloud" width="17" height="14" viewBox="0 0 17 14"><path d="M2.500 9a2.700 2.700 0 010-5C4 .5 8.500 0 10 3c3 0 4.500 2 4 5z" fill="#8a8a8a"/><path d="M2.500 9.500C3 5 8 5 10 7l1 2.500z" fill="#eee"/><circle cx="11.500" cy="9.300" r="4.500" fill="#9a9a9a"/><path d="M10.200 7v4.500M12.800 7v4.500" stroke="#fff" stroke-width="1.300"/></svg>
    <svg class="t-bat" width="16" height="14" viewBox="0 0 16 14"><path d="M.7 2.700h13.600v6.600H.7z" fill="none" stroke="#fff" stroke-width="1.300"/><path d="M2 4h5v4H2z" fill="#fff"/><circle cx="11" cy="9" r="4.600" fill="#21a121"/><path d="M11 6l2.200 3-2.200 2.500L8.800 9zM11 9v4" fill="none" stroke="#d6ffd6"/></svg>
    <svg class="t-vol" width="16" height="13" viewBox="0 0 16 13" fill="none" stroke="#fff" stroke-width="1.100"><path d="M.6 4.500h2L6 1.500v10l-3.400-3h-2zM8 4.500c1 1.200 1 2.800 0 4M10.200 2.800c2 2.200 2 5.200 0 7.400"/><path d="M12.500 1c3 3.500 3 7.500 0 11" stroke="#777"/></svg>
    <svg class="t-plane2" width="16" height="16" viewBox="0 0 16 16" fill="none" stroke="#fff" stroke-width="1.200"><path d="M15.300 8c0-1-1.500-1.200-4-1.200L7.500 1H6l1.500 5.800H4L2.300 4.800H1L2 8l-1 3.200h1.300L4 9.200h3.500L6 15h1.500l3.800-5.800c2.500 0 4-.2 4-1.200z"/></svg>
    <span class="lang">ENG</span>
    <div class="clock"><span>07:24</span><span>11-06-2020</span></div>
    <div class="note"><svg width="24" height="24" viewBox="0 0 24 24"><path d="M0 0h16v12.500H8L4.500 16v-3.500H0z" fill="#fff"/><path d="M2.500 3.500h11M2.500 6.500h11M2.500 9.500h6" stroke="#111" stroke-width="1.200"/><circle cx="15.500" cy="15.500" r="7.800" fill="#3c3c3c" stroke="#8a8a8a"/></svg><span>2</span></div>
    <i class="peek"></i>
  </div>
</footer>
</body>
</html>
```

FILE: styles.css
```css
* { box-sizing: border-box; }
html, body { margin: 0; height: 100%; overflow: hidden; }
body {
  display: grid;
  grid-template-rows: 33px 41px 654px 40px;
  width: 1366px;
  height: 768px;
  font-family: "Open Sans", "Noto Sans", sans-serif;
  background: #fff;
}
svg { display: block; flex: none; }
svg:not([fill]) { fill: currentColor; }
.defs { position: absolute; width: 0; height: 0; }
i { font-style: normal; }

/* browser tabs */
.tabstrip { display: flex; background: #20233f; border-bottom: 1px solid #111430; color: #f9f9fa; }
.pin { width: 41px; padding: 9px 0 0 12px; border-right: 1px solid #5c5e73; }
.pin.dim { color: #23262f; }
.fav { width: 16px; height: 16px; }
.tab { display: flex; width: 82.9px; padding: 9px 0 0 9px; border-right: 1px solid #5c5e73; font-size: 11.500px; line-height: 18px; overflow: hidden; }
.tab .ttl { width: 48px; margin-left: 6px; white-space: nowrap; -webkit-mask-image: linear-gradient(90deg, #000 40%, transparent 88%); mask-image: linear-gradient(90deg, #000 40%, transparent 88%); }
.tab .ttl.soft { -webkit-mask-image: linear-gradient(90deg, #000 50%, transparent 100%); mask-image: linear-gradient(90deg, #000 50%, transparent 100%); }
.tab.notitle-icon { border-right: 0; }
.tab.notitle-icon .ttl { width: 68px; margin-left: 0; -webkit-mask-image: linear-gradient(90deg, #000 60%, transparent 94%); mask-image: linear-gradient(90deg, #000 60%, transparent 94%); }
.tab.active { width: 82px; height: 33px; padding-top: 6px; border: 0; border-top: 3px solid #0a84ff; background: #f9f9fa; color: #24292e; }
.tab.active .ttl { width: 28px; -webkit-mask-image: linear-gradient(90deg, #000 10%, transparent 85%); mask-image: linear-gradient(90deg, #000 10%, transparent 85%); }
.close { width: 10px; height: 10px; margin: 3px 0 0 1px; }
.newtab { padding: 9px 0 0 9px; }
.winbtns { display: flex; gap: 36px; margin: 11px 0 0 auto; padding-right: 18px; }

/* address bar */
.toolbar { display: flex; align-items: center; background: #f9f9fa; border-bottom: 1px solid #ccc; }
.back { display: grid; place-items: center; width: 34px; height: 34px; margin-left: 3px; border: 1px solid #a8a8aa; border-radius: 50%; background: #fff; }
.fwd { margin-left: 8px; }
.reload { margin-left: 16px; }
.home { margin-left: 16px; }
.urlbar { display: flex; align-items: center; width: 849px; height: 30px; margin-left: 114px; border: 1px solid #b1b1b3; border-radius: 2px; background: #fff; }
.u-shield { margin-left: 8px; }
.u-div { width: 1px; height: 22px; margin-left: 9px; background: #ddd; }
.u-lock { margin-left: 7px; }
.url { width: 639px; margin-left: 10px; padding-top: 2px; font-size: 13.200px; letter-spacing: .06px; color: #7b7b7e; white-space: nowrap; -webkit-mask-image: linear-gradient(90deg, #000 96%, transparent); mask-image: linear-gradient(90deg, #000 96%, transparent); }
.url b { font-weight: 400; color: #0c0c0d; }
.zoom { display: grid; place-items: center; width: 39px; height: 17px; margin: 1px 0 0 7px; border: 1px solid #ccc; border-radius: 9px; background: #efeff0; font-size: 10.800px; letter-spacing: -.3px; }
.d2 { margin-left: 12px; }
.u-dots { margin-left: 11px; }
.u-pocket { margin-left: 11px; }
.u-star { margin-left: 11px; }
.tb-right { display: flex; align-items: center; gap: 17px; margin-left: 115px; }
.tb-right svg:nth-child(2) { margin-left: 1px; }
.tb-right svg:nth-child(3), .tb-right svg:nth-child(4) { margin-left: -1px; }
.tb-div { width: 1px; height: 34px; margin-left: -6px; background: #d7d7db; }
.tb-right svg:last-child { margin-left: -2px; }

/* viewport */
.view { display: flex; overflow: hidden; }
.page { width: 1349px; height: 654px; overflow: hidden; background: #fff; }
.scroll { display: flex; flex-direction: column; align-items: center; width: 17px; padding: 6px 0 5px; background: #f0f0f0; border-left: 1px solid #fff; }
.thumb { flex: none; width: 15px; height: 377px; margin: 5px 0 auto; background: #cdcdcd; }

/* site header */
.ghhead { position: relative; display: flex; align-items: center; height: 47px; padding-left: 14px; background: #24292e; color: #fff; }
.logo { width: 29px; height: 29px; }
.search { display: flex; align-items: center; justify-content: space-between; width: 269px; height: 25px; margin-left: 14px; padding: 0 7px; border-radius: 3px; background: #3f4448; color: #a2a5a8; font-size: 12.300px; letter-spacing: .1px; }
.search span { padding-top: 2px; }
kbd { display: grid; place-items: center; width: 16px; height: 16px; margin-top: 1px; border: 1px solid #6b6f73; border-radius: 3px; font: 9px "Open Sans"; color: #888; }
.ghnav { display: flex; margin-left: 14px; padding-top: 2px; font-size: 12.350px; font-weight: 600; }
.ghnav a { width: 93px; white-space: nowrap; }
.ghnav a:nth-child(2) { width: 51px; }
.ghnav a:nth-child(3) { width: 88px; }
.ghnav a:nth-child(4) { width: 50px; }
.ghright { display: flex; align-items: center; margin: 3px 0 0 auto; padding-right: 14px; }
.belli { width: 14px; height: 14px; margin-right: 17px; }
.caret { width: 0; height: 0; margin-left: 4px; border: 3.500px solid transparent; border-top-color: #fff; border-bottom-width: 0; }
.caret.faded { border-top-color: #c0c2c4; margin-left: 4px; border-width: 3px 3px 0; }
.me { width: 18px; height: 18px; margin-left: 15px; }
.menu { position: absolute; z-index: 5; left: 1174px; top: 41px; width: 160px; height: 386px; border-radius: 3px; background: #fff; box-shadow: 0 0 0 1px rgba(27,31,35,.13), 0 3px 10px rgba(27,31,35,.15); color: #24292e; font-size: 12.200px; letter-spacing: .12px; }
.menu::before { content: ""; position: absolute; right: 8px; top: -6px; border: 7px solid transparent; border-top: 0; border-bottom: 6px solid #fff; }
.signed { height: 53px; padding: 8px 0 0 15px; line-height: 19px; border-bottom: 1px solid #e1e4e8; }
.signed strong { display: block; font-weight: 600; font-size: 12.200px; letter-spacing: .08px; }
.statusrow { height: 48px; padding: 7px 15px 0; border-bottom: 1px solid #e1e4e8; }
.status { display: flex; align-items: center; width: 130px; height: 29px; padding-left: 7px; border: 1px solid #e1e4e8; border-radius: 3px; color: #586069; font-size: 10.900px; letter-spacing: 0; }
.status span { margin-left: 17px; padding-top: 2px; }
.mgroup { height: 145px; padding: 8px 0 0 15px; border-bottom: 1px solid #e1e4e8; }
.mgroup.last { border: 0; }
.mgroup a { display: block; line-height: 26px; }

/* banner */
.hero { display: flex; flex-direction: column; align-items: center; height: 269px; border-bottom: 1px solid #e1e4e8; background: linear-gradient(180deg, rgba(255,255,255,0) 60%, #fff), linear-gradient(70deg, #dbedff 32%, #e6ffed 86%); }
.hero h2 { margin: 66px 0 0; font-size: 25.550px; line-height: 36px; font-weight: 400; color: #2f363d; white-space: nowrap; }
.hero p { margin: 11px 0 0; font-size: 15.330px; line-height: 24px; color: #586069; white-space: nowrap; }
.green { display: grid; place-items: center; width: 185px; height: 38px; margin-top: 26px; padding-top: 1px; border: 1px solid #28963d; border-radius: 3px; background: linear-gradient(#34d058, #28a745); color: #fff; font-size: 13.100px; font-weight: 600; }

/* repository header */
.repohead { height: 115px; padding: 0 0 0 236px; background: #fafbfc; border-bottom: 1px solid #e1e4e8; }
.repotop { display: flex; justify-content: space-between; width: 877px; height: 80px; padding-top: 14px; }
.reponame { color: #0366d6; font-size: 15.200px; line-height: 25px; white-space: nowrap; }
.reponame strong { font-weight: 600; font-size: 15.300px; letter-spacing: .18px; }
.owner { display: flex; align-items: center; }
.owner span { letter-spacing: -.08px; }
.owner em { margin-left: 5px; font-style: normal; color: #586069; }
.repoi { width: 14px; height: 14px; margin-right: 7px; color: #8d949b; }
.actions { display: flex; gap: 9px; }
.btng { display: flex; height: 25px; border: 1px solid #cdd0d4; border-radius: 3px; background: #fff; color: #24292e; font-size: 10.900px; line-height: 24px; overflow: hidden; }
.btng span { display: flex; align-items: center; width: 77px; padding-left: 9px; background: linear-gradient(#fafbfc, #eff3f6); border-right: 1px solid #cdd0d4; font-weight: 600; letter-spacing: -.1px; }
.btng svg { width: 14.400px; height: 14.400px; margin-right: 3px; }
.btng b { flex: 1; text-align: center; font-weight: 600; }
.watch { width: 101px; }
.starb { width: 82px; }
.starb span { width: 56px; }
.forkb { width: 85px; }
.forkb span { width: 59px; background: #eff3f6; color: #959da5; }
.caret.dark { border-top-color: #24292e; margin-left: 3px; border-width: 3.500px 3.500px 0; }
.reponav { display: flex; height: 35px; color: #586069; font-size: 12.300px; letter-spacing: -.03px; }
.reponav a { display: flex; align-items: center; height: 35px; padding: 2px 0 0 11px; white-space: nowrap; }
.reponav svg { width: 14.400px; height: 14.400px; margin-right: 4.500px; color: #babdc1; }
.reponav i { min-width: 14px; height: 14px; margin-left: 4px; border-radius: 8px; background: #e9ebed; font-size: 10px; font-weight: 600; line-height: 14px; text-align: center; color: #444d56; }
.reponav a:nth-child(1) { width: 73px; }
.reponav .sel { width: 93px; padding: 0 0 1px 10px; border: 1px solid #e1e4e8; border-top: 3px solid #e36209; border-bottom: 0; border-radius: 3px 3px 0 0; background: #fff; color: #24292e; height: 36px; }
.reponav .sel svg { color: #24292e; }
.reponav a:nth-child(3) { width: 134px; padding-left: 12px; }
.reponav a:nth-child(4) { width: 84px; }
.reponav a:nth-child(5) { width: 105px; }
.reponav a:nth-child(6) { width: 66px; }
.reponav a:nth-child(7) { width: 104px; }
.reponav a:nth-child(8) { width: 86px; }

/* new issue form */
.main { display: flex; align-items: flex-start; padding: 36px 0 0 236px; }
.avatar { width: 36px; height: 36px; }
.box { position: relative; width: 601px; height: 240px; margin-left: 14px; border: 1px solid #d1d5da; border-radius: 3px; padding-top: 7px; }
.notch { position: absolute; left: -7px; top: 10px; }
.title, .comment { margin: 0 7px; border: 1px solid #d1d5da; border-radius: 3px; background: #fafbfc; box-shadow: inset 0 1px 2px rgba(27,31,35,.075); color: #a3aab1; }
.title { height: 31px; padding-left: 9px; font-size: 13px; line-height: 31px; }
.comment { height: 150px; margin-top: 7px; padding: 9px 7px; font-size: 12.300px; line-height: 17px; letter-spacing: .08px; }
.edit { display: flex; height: 48px; padding-left: 7px; border-bottom: 1px solid #d1d5da; font-size: 12.300px; color: #586069; }
.write { width: 62px; height: 34px; margin-top: 14px; border: 1px solid #d1d5da; border-bottom: 0; border-radius: 3px 3px 0 0; background: #fff; line-height: 35px; text-align: center; color: #24292e; }
.preview { width: 46px; margin: 14px 0 0 15px; line-height: 37px; letter-spacing: -.1px; }
.tools { display: grid; grid-template-columns: 27px 29px 43px 28px 26px 43px 29px 26px 39px 30px 28px 20px 10px; align-items: center; justify-items: center; height: 14px; margin: 21px 0 0 86px; }
.tools svg { width: 14.400px; height: 14.400px; justify-self: start; }
.tools .caret { margin: 0 0 0 -8px; border-top-color: #586069; }
.s { fill: none; stroke: #586069; stroke-width: 1.500; stroke-linecap: round; stroke-linejoin: round; }
.s.bold { stroke-width: 2.200; }
.s.thin { stroke-width: 1; }
.side { width: 198px; margin-left: 28px; font-size: 10.900px; color: #586069; letter-spacing: .1px; }
.sitem { height: 69px; border-bottom: 1px solid #e1e4e8; }
.side h4 { display: flex; justify-content: space-between; align-items: center; margin: 0; padding-top: 15px; font-size: 10.700px; font-weight: 500; line-height: 16px; letter-spacing: 0; }
.side h4 svg { width: 14.400px; height: 14.400px; color: #959da5; }
.side p { margin: 7px 0 0; line-height: 16px; }
.second h4 { padding-top: 15px; }
.second h4 svg { margin-top: -1px; }
.second p { margin-top: 8px; }

/* taskbar */
.taskbar { display: flex; background: #0e1013; color: #fff; }
.start { display: grid; place-items: center; width: 48px; }
.wsearch { display: flex; align-items: center; width: 344px; padding: 0 14px 0 9px; background: #f1f1f1; border-top: 1px solid #b8b8b8; color: #333; font-size: 14px; letter-spacing: -.02px; }
.cortana { width: 21px; height: 21px; border: 3px solid #111; border-radius: 50%; }
.wsearch span { margin: 0 auto 0 10px; }
.tview { display: grid; place-items: center; width: 50px; }
.app { display: grid; place-items: center; width: 47px; }
.app.on { background: linear-gradient(#76b9ed, #76b9ed) center bottom / 38px 2px no-repeat; }
.app.exp { background-size: 46px 2px; background-color: #2d2e30; border-right: 1px solid #0e1013; }
.app.current { background-size: 46px 2px; background-color: #414245; }
.pdf { font: bold 6px "Open Sans"; fill: #fff; }
.tray { display: flex; align-items: center; flex: 1; padding-left: 7px; }
.batt { display: grid; place-items: center; width: 49px; height: 20px; border: 2px solid #fff; background: linear-gradient(90deg, #179c4b 30%, #000 30%); font-size: 13.200px; line-height: 16px; }
.nub { width: 2px; height: 8px; background: #fff; }
.t-plane { margin-left: 3px; }
.t-people { margin-left: 19px; }
.t-up { margin-left: 22px; }
.t-cloud { margin-left: 10px; }
.t-bat { margin-left: 8px; }
.t-vol { margin-left: 7px; }
.t-plane2 { margin-left: 9px; }
.lang { width: 24px; margin-left: 10px; font-size: 11.500px; letter-spacing: -.4px; }
.clock { display: flex; flex-direction: column; align-items: center; width: 60px; margin: 0 0 2px 11px; font-size: 11.500px; line-height: 18px; letter-spacing: -.3px; white-space: nowrap; }
.note { position: relative; width: 24px; height: 24px; margin: 3px 0 0 16px; }
.note span { position: absolute; left: 0; top: 6px; width: 31px; text-align: center; font-size: 12px; line-height: 19px; }
.peek { width: 1px; height: 40px; margin-left: auto; margin-right: 4px; background: #555; }
```
